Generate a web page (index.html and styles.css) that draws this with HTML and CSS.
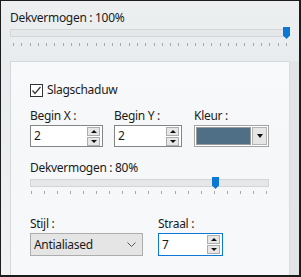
FILE: index.html
```html
<!DOCTYPE html>
<html lang="nl">
<head>
  <meta charset="UTF-8" />
  <title>Slagschaduw</title>
  <link rel="stylesheet" href="styles.css">
</head>
<body>

<div class="dialog">

  <!-- opacity of the layer -->
  <div class="top">
    <div class="label">Dekvermogen : 100%</div>
    <div class="slider top-slider">
      <div class="track"></div>
      <svg class="thumb" style="left: 273px" width="7" height="12" viewBox="0 0 7 12"><path d="M0 0H7V8.5L3.5 12L0 8.5Z"/></svg>
    </div>
    <div class="ticks top-ticks" data-count="34"></div>
  </div>

  <div class="lower">
    <div class="panel">

      <label class="check">
        <span class="box">
          <svg width="11" height="11" viewBox="0 0 11 11"><path d="M1.5 5.5L4 8.5L9.5 2" /></svg>
        </span>
        Slagschaduw
      </label>

      <div class="fields">
        <div class="field field-x">
          <div class="label">Begin X :</div>
          <div class="spin">
            <span class="value">2</span>
            <span class="spin-btns"><span class="up"></span><span class="down"></span></span>
          </div>
        </div>
        <div class="field field-y">
          <div class="label">Begin Y :</div>
          <div class="spin">
            <span class="value">2</span>
            <span class="spin-btns"><span class="up"></span><span class="down"></span></span>
          </div>
        </div>
        <div class="field field-color">
          <div class="label">Kleur :</div>
          <div class="color-combo">
            <span class="swatch"></span>
            <span class="combo-btn"><span class="down"></span></span>
          </div>
        </div>
      </div>

      <div class="label shadow-label">Dekvermogen : 80%</div>
      <div class="slider panel-slider">
        <div class="track"></div>
        <svg class="thumb" style="left: 182px" width="7" height="12" viewBox="0 0 7 12"><path d="M0 0H7V8.5L3.5 12L0 8.5Z"/></svg>
      </div>
      <div class="ticks panel-ticks" data-count="19"></div>

      <div class="fields bottom-fields">
        <div class="field field-style">
          <div class="label">Stijl :</div>
          <div class="select">
            <span>Antialiased</span>
            <svg width="9" height="5" viewBox="0 0 9 5"><path d="M0.5 0.5L4.5 4.5L8.5 0.5" /></svg>
          </div>
        </div>
        <div class="field field-radius">
          <div class="label">Straal :</div>
          <div class="spin focused">
            <span class="value">7</span>
            <span class="spin-btns"><span class="up"></span><span class="down"></span></span>
          </div>
        </div>
      </div>

    </div>
    <div class="gutter"></div>
  </div>

</div>

<script>
  // tick marks under the sliders
  document.querySelectorAll('.ticks').forEach(function (row) {
    var n = parseInt(row.dataset.count, 10);
    for (var i = 0; i < n; i++) {
      row.appendChild(document.createElement('span'));
    }
  });
</script>

</body>
</html>
```

FILE: styles.css
```css
* {
  margin: 0;
  padding: 0;
  box-sizing: border-box;
}

body {
  background: #ffffff;
  font-family: "Noto Sans", "Open Sans", sans-serif;
  font-size: 12px;
  letter-spacing: -0.3px;
  color: #1b1b1b;
}

.dialog {
  width: 301px;
  height: 277px;
  border: solid #1c1c1c;
  border-width: 1px 2px 2px 1px;
  background: linear-gradient(#edeff0, #e9ecee 55px, #f0f2f3);
  display: flex;
  flex-direction: column;
  overflow: hidden;
}

.label {
  line-height: 16px;
  height: 16px;
  white-space: nowrap;
}

/* top part */
.top {
  padding: 9px 9px 0 9px;
}

.slider {
  position: relative;
  height: 8px;
}

.slider .track {
  height: 8px;
  background: #e5e7e8;
  border: 1px solid #d3d6d8;
}

.slider .thumb {
  position: absolute;
  top: -2px;
  fill: #0a78d4;
}

.top-slider {
  width: 279px;
  margin-top: 3px;
}

.ticks {
  display: flex;
  justify-content: space-between;
  height: 3px;
}

.ticks span {
  width: 1px;
  height: 3px;
  background: #a4a6a8;
}

.top-ticks {
  width: 279px;
  margin-top: 6px;
  padding: 0 2px 0 3px;
}

/* lower part */
.lower {
  display: flex;
  flex: 1;
  margin-top: 15px;
  padding-left: 9px;
}

.panel {
  width: 279px;
  background: linear-gradient(#f8f9fa, #f5f7f9 80px, #f6f8f9);
  border: solid #d5d8db;
  border-width: 1px 0 0 1px;
  padding: 20px 0 0 19px;
}

.gutter {
  flex: 1;
  background: #e3e4e5;
  border-left: 1px solid #dadcde;
}

.check {
  display: flex;
  align-items: center;
  gap: 4px;
  height: 16px;
  line-height: 16px;
}

.check .box {
  width: 13px;
  height: 13px;
  border: 1px solid #333;
  background: #ffffff;
  display: flex;
  align-items: center;
  justify-content: center;
}

.check .box svg {
  fill: none;
  stroke: #333;
  stroke-width: 1.2;
}

.fields {
  display: flex;
  margin-top: 10px;
}

.field .label {
  margin-bottom: 1px;
}

.field-x {
  width: 73px;
  margin-right: 11px;
}

.field-y {
  width: 68px;
  margin-right: 12px;
}

.field-color {
  width: 75px;
}

.spin {
  height: 22px;
  border: 1px solid #858585;
  background: #ffffff;
  display: flex;
  align-items: center;
  justify-content: space-between;
  padding: 0 2px 0 3px;
}

.spin.focused {
  border-color: #0a78d4;
}

.spin .value {
  line-height: 16px;
}

.spin-btns {
  display: flex;
  flex-direction: column;
  gap: 1px;
}

.spin-btns span {
  width: 13px;
  height: 9px;
  background: #e6e6e6;
  border: 1px solid #adadad;
}

.up,
.down {
  display: flex;
  align-items: center;
  justify-content: center;
  line-height: 0;
}

.up::after,
.down::after {
  content: "";
  border-left: 3px solid transparent;
  border-right: 3px solid transparent;
}

.up::after {
  border-bottom: 3px solid #111;
}

.down::after {
  border-top: 3px solid #111;
}

.color-combo {
  height: 22px;
  border: 1px solid #a3a3a3;
  background: #ffffff;
  display: flex;
  gap: 1px;
  padding: 1px;
}

.swatch {
  width: 55px;
  background: #4f6f86;
  border: 1px solid #9a9a9a;
}

.combo-btn {
  flex: 1;
  background: #e6e6e6;
  border: 1px solid #b4b4b4;
  display: flex;
  align-items: center;
  justify-content: center;
}

.combo-btn .down::after {
  border-left-width: 3.5px;
  border-right-width: 3.5px;
  border-top-width: 4px;
}

.shadow-label {
  margin-top: 13px;
}

.panel-slider {
  width: 239px;
  margin-top: 3px;
}

.panel-ticks {
  width: 239px;
  margin-top: 4px;
  padding: 0 2px 0 1px;
}

.bottom-fields {
  margin-top: 22px;
}

.field-style {
  width: 113px;
  margin-right: 15px;
}

.field-radius {
  width: 65px;
}

.select {
  height: 23px;
  background: #e5e5e5;
  border: 1px solid #adadad;
  display: flex;
  align-items: center;
  justify-content: space-between;
  padding: 0 6px 0 3px;
}

.select svg {
  fill: none;
  stroke: #555;
  stroke-width: 1;
}

.field-radius .spin {
  height: 23px;
}
```
